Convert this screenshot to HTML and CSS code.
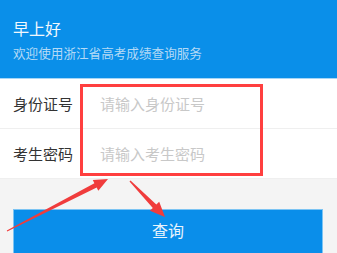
FILE: index.html
```html
<!DOCTYPE html>
<html>
<head>
<meta charset="utf-8">
<link rel="stylesheet" href="styles.css">
</head>
<body>
<div class="page">
  <header class="hero">
    <div class="greet">早上好</div>
    <div class="sub">欢迎使用浙江省高考成绩查询服务</div>
  </header>
  <div class="form">
    <div class="row">
      <span class="label">身份证号</span>
      <span class="ph">请输入身份证号</span>
    </div>
    <div class="row">
      <span class="label">考生密码</span>
      <span class="ph">请输入考生密码</span>
    </div>
  </div>
  <div class="bottom">
    <div class="btn">查询</div>
  </div>
  <div class="mark"></div>
  <svg class="arrows" width="337" height="253" viewBox="0 0 337 253">
    <g fill="#f03c3c" stroke="none">
      <polygon points="6.8,230.6 94.4,183.2 92.8,180.1 108,179 98.3,190.7 96.7,187.6 7.2,231.4"/>
      <polygon points="130.5,180.5 156.3,204.5 159.2,201.7 165,217 149.9,210.8 152.8,208 129.5,181.5"/>
    </g>
  </svg>
</div>
</body>
</html>
```
FILE: styles.css
```css
html, body {
  margin: 0;
  padding: 0;
}
body {
  font-family: "Noto Sans CJK SC", "Noto Sans", sans-serif;
  background: #f4f4f4;
}
.page {
  position: relative;
  width: 337px;
  height: 253px;
  overflow: hidden;
  background: #f4f4f4;
}
.hero {
  height: 78px;
  background: #0a8fe9;
  border-bottom: 1px solid #a7d6f6;
  padding: 0 13px;
  box-sizing: content-box;
  display: flex;
  flex-direction: column;
}
.greet {
  color: #f2f8fd;
  font-size: 16px;
  line-height: 20px;
  margin-top: 18px;
}
.sub {
  color: #b4daf6;
  font-size: 12.6px;
  line-height: 16px;
  margin-top: 7px;
}
.form {
  background: #fff;
}
.row {
  height: 49px;
  border-bottom: 1px solid #efefef;
  display: flex;
  align-items: center;
  padding-left: 13px;
}
.label {
  color: #333;
  font-size: 15px;
  width: 87px;
}
.ph {
  color: #c8c8c8;
  font-size: 15px;
}
.bottom {
  padding: 30px 14px 0 13px;
}
.btn {
  height: 46px;
  background: #0a8eea;
  border: 1px solid #7cc4f3;
  color: #e8f3fc;
  font-size: 16px;
  display: flex;
  align-items: center;
  justify-content: center;
  padding-bottom: 4px;
  box-sizing: border-box;
}
.mark {
  position: absolute;
  left: 80px;
  top: 84px;
  width: 183px;
  height: 92px;
  border: 3px solid #ff3f3f;
  box-sizing: border-box;
}
.arrows {
  position: absolute;
  left: 0;
  top: 0;
}
```
